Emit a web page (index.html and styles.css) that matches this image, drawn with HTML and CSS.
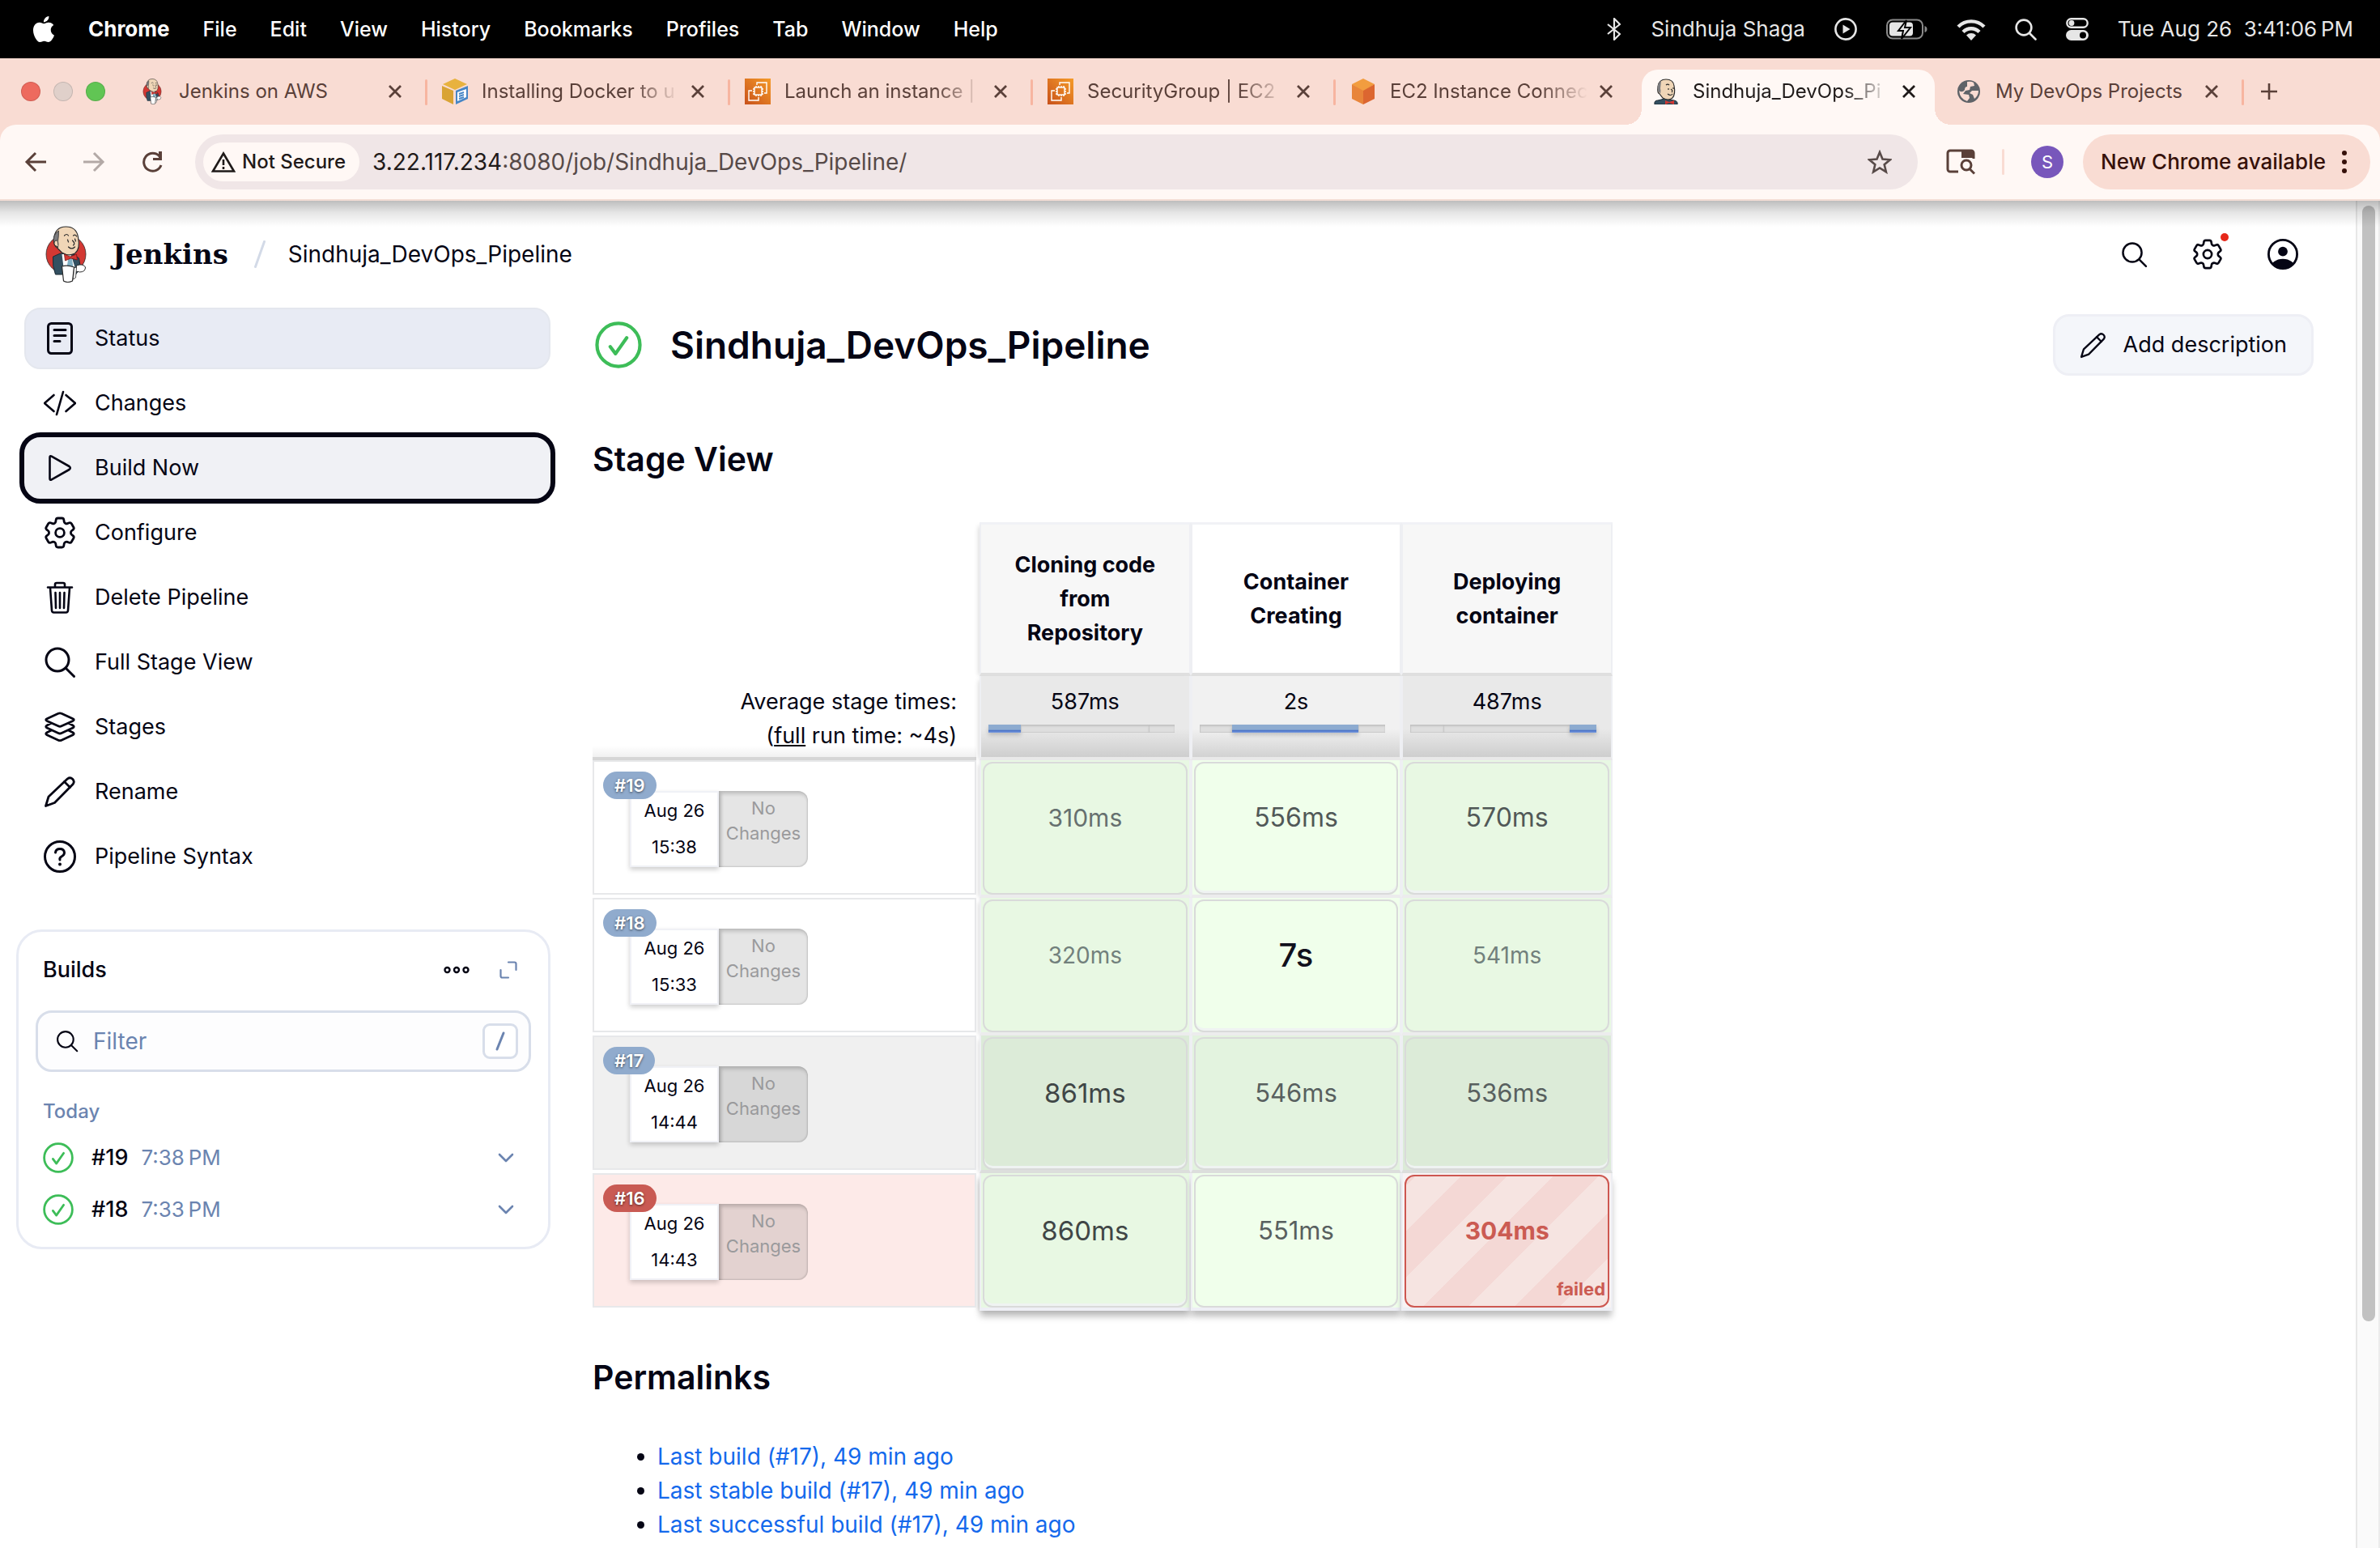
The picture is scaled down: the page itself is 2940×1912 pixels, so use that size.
FILE: index.html
```html
<!DOCTYPE html>
<html lang="en">
<head>
<meta charset="utf-8">
<meta name="viewport" content="width=device-width, initial-scale=1">
<title>Sindhuja_DevOps_Pipeline [Jenkins]</title>
<link rel="stylesheet" href="styles.css">
</head>
<body>
<svg class="sprite" aria-hidden="true">
  <symbol id="i-search" viewBox="0 0 40 40"><g fill="none" stroke="currentColor" stroke-width="3" stroke-linecap="round"><circle cx="17" cy="17" r="14"/><path d="M27.500 27.500 37.500 37.500"/></g></symbol>
  <symbol id="i-gear" viewBox="2 2 20 20"><g fill="none" stroke="currentColor" stroke-width="1.400" stroke-linejoin="round"><path d="M9.594 3.940c.09-.542.56-.94 1.110-.94h2.593c.55 0 1.020.398 1.110.94l.213 1.281c.063.374.313.686.645.87.074.04.147.083.22.127.325.196.72.257 1.075.124l1.217-.456a1.125 1.125 0 0 1 1.370.49l1.296 2.247a1.125 1.125 0 0 1-.26 1.431l-1.003.827c-.293.241-.438.613-.43.992a7.723 7.723 0 0 1 0 .255c-.008.378.137.75.43.991l1.004.827c.424.35.534.955.26 1.430l-1.298 2.247a1.125 1.125 0 0 1-1.369.491l-1.217-.456c-.355-.133-.75-.072-1.076.124a6.470 6.470 0 0 1-.22.128c-.331.183-.581.495-.644.869l-.213 1.281c-.09.543-.56.94-1.110.94h-2.594c-.55 0-1.019-.398-1.110-.94l-.213-1.281c-.062-.374-.312-.686-.644-.87a6.520 6.520 0 0 1-.22-.127c-.325-.196-.72-.257-1.076-.124l-1.217.456a1.125 1.125 0 0 1-1.369-.49l-1.297-2.247a1.125 1.125 0 0 1 .26-1.431l1.004-.827c.292-.24.437-.613.43-.991a6.932 6.932 0 0 1 0-.255c.007-.38-.138-.751-.43-.992l-1.004-.827a1.125 1.125 0 0 1-.26-1.430l1.297-2.247a1.125 1.125 0 0 1 1.370-.491l1.216.456c.356.133.751.072 1.076-.124.072-.044.146-.086.22-.128.332-.183.582-.495.644-.869l.214-1.280Z"/><circle cx="12" cy="12" r="2.700"/></g></symbol>
  <symbol id="i-pencil" viewBox="0 0 40 40"><g fill="none" stroke="currentColor" stroke-width="2.800" stroke-linejoin="round" stroke-linecap="round"><path d="M2.500 37.500 6 26 29.500 3.800a4.800 4.800 0 0 1 6.700 6.700L13.500 33.500Z"/><path d="m25.500 7.500 7 7"/></g></symbol>
  <symbol id="i-ok" viewBox="0 0 40 40"><g fill="none" stroke="currentColor" stroke-width="2.900" stroke-linecap="round" stroke-linejoin="round"><circle cx="20" cy="20" r="18.300"/><path d="m13 21.500 4.500 6L27 14"/></g></symbol>
  <symbol id="i-x" viewBox="0 0 20 20"><path d="m3 3 14 14M17 3 3 17" stroke="currentColor" stroke-width="2.800"/></symbol>
  <symbol id="i-down" viewBox="0 0 20 12"><path d="m2 2 8 8 8-8" fill="none" stroke="currentColor" stroke-width="2.600" stroke-linecap="round" stroke-linejoin="round"/></symbol>
  <symbol id="i-butler" viewBox="0 0 50 70">
    <ellipse cx="25" cy="35" rx="24.500" ry="24" fill="#d33833" stroke="#2b2b2b" stroke-width=".8"/>
    <path d="M9 38 18 34 33 34 41 40 43 52 37 60 12 60Q8 50 9 38Z" fill="#335061" stroke="#1c2a33" stroke-width="1"/>
    <path d="M20 35 31 35 36 51 22 51Z" fill="#fff"/>
    <path d="M28 40 32 38 34 51 26 51Z" fill="#81b0c4"/>
    <path d="M10 17Q11 1 25 1Q38 1 40 14Q43 29 36 34Q28 38 20 33L14 27Q10 25 10 17Z" fill="#f0d6b7" stroke="#2b2b2b" stroke-width="1.200"/>
    <path d="M16 6Q8 11 10 21L15 27Q16 23 15 19 16 13 16 6Z" fill="#7c7c7f" stroke="#2b2b2b" stroke-width=".8"/>
    <path d="M14 18Q9 18 11 24L15 26" fill="#f0d6b7" stroke="#2b2b2b" stroke-width="1"/>
    <path d="M23 12q3-3 5 0M34 12q3-2 4 1M27 17l1 3M36 16l1 3M33 18q4 4 1 6M28 26q4 4 8 0" fill="none" stroke="#2b2b2b" stroke-width="1.200" stroke-linecap="round"/>
    <path d="M23 35 30 38 38 35 39 42 31 40 24 43Z" fill="#d33833" stroke="#7a1412" stroke-width=".8"/>
    <path d="M38 49q8-3 11 2 0 6-7 6l-5-1Z" fill="#fff" stroke="#2b2b2b" stroke-width="1"/>
    <path d="M20 50Q27 48 35 51L33 68Q27 71 22 68Z" fill="#fff" stroke="#2b2b2b" stroke-width="1.200"/>
    <path d="M35 52 38 51 37 64 34 66Z" fill="#fff" stroke="#2b2b2b" stroke-width=".8"/>
  </symbol>
  <symbol id="i-butler-head" viewBox="0 0 32 32">
    <path d="M2 32Q1 27 6 27L14 25 26 27Q31 28 30 32Z" fill="#335061" stroke="#1c2a33" stroke-width="1"/>
    <path d="M6 10Q7 1 16 1Q25 1 26 9Q28 19 24 24Q19 28 12 24L8 19Q5 18 6 10Z" fill="#f0d6b7" stroke="#2b2b2b" stroke-width="1.200"/>
    <path d="M10 3Q4 7 6 15L9 19Q10 15 9 12Z" fill="#7c7c7f"/>
    <path d="M16 8q2-2 4 0M19 12v2M25 11v2M22 13q3 2 1 4M18 19q4 3 6 0" fill="none" stroke="#2b2b2b" stroke-width="1.200"/>
    <path d="M15 27 20 29 26 27V32L20 30 15 32Z" fill="#d33833"/>
  </symbol>
  <symbol id="i-ec2" viewBox="0 0 32 32">
    <defs><linearGradient id="ec2" x1="0" y1="1" x2="1" y2="0"><stop offset="0" stop-color="#c8511b"/><stop offset="1" stop-color="#f59b28"/></linearGradient></defs>
    <rect width="32" height="32" fill="url(#ec2)"/>
    <g fill="none" stroke="#fff" stroke-width="1.400"><rect x="12" y="11" width="9" height="9"/><path d="M14 9v2M17 9v2M20 9v2M14 20v2M17 20v2M20 20v2M10 13h2M10 16h2M10 19h2M21 13h2M21 16h2M21 19h2M15 8V5h12v13h-3M9 15H5v12h12v-4"/></g>
  </symbol>
</svg>

<header class="menubar">
  <nav class="menubar-menus" aria-label="Application menu">
    <button aria-label="Apple"><svg class="apple" viewBox="2 0 20 24"><path fill="currentColor" d="M12.152 6.896c-.948 0-2.415-1.078-3.960-1.040-2.040.027-3.910 1.183-4.961 3.014-2.117 3.675-.546 9.103 1.519 12.090 1.013 1.454 2.208 3.090 3.792 3.039 1.520-.065 2.090-.987 3.935-.987 1.831 0 2.350.987 3.960.948 1.637-.026 2.676-1.480 3.676-2.948 1.156-1.688 1.636-3.325 1.662-3.415-.039-.013-3.182-1.221-3.220-4.857-.026-3.040 2.480-4.494 2.597-4.559-1.429-2.090-3.623-2.324-4.390-2.376-2-.156-3.675 1.090-4.610 1.090zM15.530 3.830c.843-1.012 1.400-2.427 1.245-3.830-1.207.052-2.662.805-3.532 1.818-.78.896-1.454 2.338-1.273 3.714 1.338.104 2.715-.688 3.559-1.701"/></svg></button>
    <button class="app">Chrome</button><button>File</button><button>Edit</button><button>View</button><button>History</button><button>Bookmarks</button><button>Profiles</button><button>Tab</button><button>Window</button><button>Help</button>
  </nav>
  <div class="menubar-status">
    <svg width="18" height="28" viewBox="0 0 18 28" fill="none" stroke="currentColor" stroke-width="2.200" stroke-linejoin="round"><path d="m1 8 15 12-7 7V1l7 7L1 20"/></svg>
    <span>Sindhuja Shaga</span>
    <svg width="28" height="28" viewBox="0 0 28 28"><circle cx="14" cy="14" r="12.600" fill="none" stroke="currentColor" stroke-width="2.600"/><path fill="currentColor" d="M10.500 8.500v11l9-5.500z"/></svg>
    <svg width="51" height="26" viewBox="0 0 51 26"><rect x="1" y="1.500" width="44" height="23" rx="7" fill="none" stroke="#8a8a8a" stroke-width="2"/><path d="M47.500 9v8q3-1 3-4t-3-4" fill="#8a8a8a"/><rect x="4" y="4.500" width="29" height="17" rx="4" fill="currentColor"/><path d="M25 2 15 15h6l-2 10 11-14h-7z" fill="currentColor" stroke="#000" stroke-width="2"/></svg>
    <svg width="36" height="27" viewBox="0 0 36 27"><g fill="none" stroke="currentColor" stroke-width="4.400"><path d="M2 10a22.600 22.600 0 0 1 32 0M8 16.500a14 14 0 0 1 20 0"/></g><path fill="currentColor" d="m18 27-6-6.500a8.500 8.500 0 0 1 12 0z"/></svg>
    <svg width="27" height="27" viewBox="0 0 27 27" fill="none" stroke="currentColor" stroke-width="2.600" stroke-linecap="round"><circle cx="11" cy="11" r="9.400"/><path d="m18 18 7.500 7.500"/></svg>
    <svg width="28" height="28" viewBox="0 0 28 28"><rect x="1.300" y="1.300" width="25.400" height="10.400" rx="5.200" fill="none" stroke="currentColor" stroke-width="2.400"/><circle cx="7" cy="6.500" r="3.400" fill="currentColor"/><rect y="15" width="28" height="13" rx="6.500" fill="currentColor"/><circle cx="21" cy="21.500" r="4" fill="#000"/></svg>
    <time>Tue Aug 26&nbsp; 3:41:06&#8239;PM</time>
  </div>
</header>

<div class="tabstrip">
  <div class="lights"><button class="light close" aria-label="Close window"></button><button class="light minimise" aria-label="Minimise"></button><button class="light zoom" aria-label="Zoom"></button></div>
  <div class="tabs">
    <div class="tab"><svg class="favicon"><use href="#i-butler"/></svg><a href="#" class="tab-title">Jenkins on AWS</a><button class="tab-close" aria-label="Close tab"><svg><use href="#i-x"/></svg></button></div>
    <div class="tab"><svg class="favicon" viewBox="0 0 32 32"><path d="M16 0 31 7 16 14 1 7Z" fill="#e8b23f"/><path d="M0 9 14 15v17L0 25Z" fill="#d9a334"/><path d="M17 15 32 9v16l-15 7Z" fill="#4786c6"/><path d="m19 17 11-4v10l-11 5z" fill="#fff"/><path d="m21 19 6-2M21 22l6-2M21 25l6-2" stroke="#4786c6" stroke-width="2"/></svg><a href="#" class="tab-title">Installing Docker to u</a><button class="tab-close" aria-label="Close tab"><svg><use href="#i-x"/></svg></button></div>
    <div class="tab"><svg class="favicon"><use href="#i-ec2"/></svg><a href="#" class="tab-title">Launch an instance |</a><button class="tab-close" aria-label="Close tab"><svg><use href="#i-x"/></svg></button></div>
    <div class="tab"><svg class="favicon"><use href="#i-ec2"/></svg><a href="#" class="tab-title">SecurityGroup | EC2</a><button class="tab-close" aria-label="Close tab"><svg><use href="#i-x"/></svg></button></div>
    <div class="tab tab-plain"><svg class="favicon" viewBox="0 0 32 32"><path d="M16 0 30 7 16 16 2 7Z" fill="#f29d3f"/><path d="M2 7 16 15v17L2 25Z" fill="#e8853a"/><path d="M30 7 16 15v17l14-7Z" fill="#dc6630"/></svg><a href="#" class="tab-title">EC2 Instance Connec</a><button class="tab-close" aria-label="Close tab"><svg><use href="#i-x"/></svg></button></div>
    <div class="tab tab-active"><svg class="favicon"><use href="#i-butler-head"/></svg><a href="#" class="tab-title">Sindhuja_DevOps_Pi</a><button class="tab-close" aria-label="Close tab"><svg><use href="#i-x"/></svg></button></div>
    <div class="tab"><svg class="favicon" viewBox="0 0 32 32"><circle cx="16" cy="16" r="14" fill="#5f6368"/><path d="M14 4q5-1 8 1l1 4-5 1-1 4-5 1-3 4 7 1 1 4-3 4Q5 25 4 15q4 3 7-1 0-4 3-4zM20 15h8q0 6-5 10l-2-5-4-2z" fill="#f9dcd3"/></svg><a href="#" class="tab-title">My DevOps Projects</a><button class="tab-close" aria-label="Close tab"><svg><use href="#i-x"/></svg></button></div>
  </div>
  <button class="new-tab" aria-label="New tab"><svg width="22" height="22" viewBox="0 0 22 22"><path d="M11 1v20M1 11h20" stroke="currentColor" stroke-width="2.600"/></svg></button>
</div>

<div class="toolbar">
  <div class="toolbar-nav">
    <button aria-label="Back"><svg width="28" height="26" viewBox="0 0 28 26" fill="none" stroke="currentColor" stroke-width="3"><path d="M27 13H3M14 2 3 13l11 11"/></svg></button>
    <button aria-label="Forward" class="off"><svg width="28" height="26" viewBox="0 0 28 26" fill="none" stroke="currentColor" stroke-width="3"><path d="M1 13h24M14 2l11 11-11 11"/></svg></button>
    <button aria-label="Reload"><svg width="28" height="26" viewBox="0 0 28 26"><path d="M25 17A11 11 0 1 1 23 6" fill="none" stroke="currentColor" stroke-width="3"/><path d="M26 0v11H15v-3h7V0z" fill="currentColor"/></svg></button>
  </div>
  <div class="omnibox">
    <button class="chip"><svg width="30" height="26" viewBox="0 0 30 26"><path d="M15 2.500 28 24.500H2Z" fill="none" stroke="currentColor" stroke-width="2.600"/><path d="M15 10v7M15 19v3" stroke="currentColor" stroke-width="2.600"/></svg>Not Secure</button>
    <div class="url" role="textbox" aria-label="Address">3.22.117.234<span>:8080/job/Sindhuja_DevOps_Pipeline/</span></div>
    <button class="star" aria-label="Bookmark this tab"><svg width="30" height="30" viewBox="0 0 30 30"><path d="m15 3 3.500 8.600 9.300.7-7.100 6 2.200 9.100L15 22.500l-7.900 4.900 2.200-9.100-7.100-6 9.300-.7z" fill="none" stroke="currentColor" stroke-width="2.600"/></svg></button>
  </div>
  <button class="lens" aria-label="Search this page"><svg width="36" height="32" viewBox="0 0 36 32"><path d="M15 28H5a3 3 0 0 1-3-3V5a3 3 0 0 1 3-3h26a3 3 0 0 1 3 3v7" fill="none" stroke="currentColor" stroke-width="3"/><path d="M19 2h15v9H19z" fill="currentColor"/><circle cx="25" cy="20" r="6" fill="none" stroke="currentColor" stroke-width="3"/><path d="m29 24.500 6 6" stroke="currentColor" stroke-width="3"/></svg></button>
  <span class="toolbar-rule"></span>
  <button class="avatar" aria-label="Profile">S</button>
  <button class="update">New Chrome available<svg width="6" height="28" viewBox="0 0 6 28" fill="currentColor"><circle cx="3" cy="3" r="3"/><circle cx="3" cy="14" r="3"/><circle cx="3" cy="25" r="3"/></svg></button>
</div>

<div class="viewport">
  <div class="page">
    <header class="page-header">
      <a class="brand" href="#"><svg class="brand-logo"><use href="#i-butler"/></svg>Jenkins</a>
      <svg class="crumb-slash" viewBox="0 0 14 34"><path d="M12.500 1.500 1.500 32.500" stroke="#d3dae7" stroke-width="3" stroke-linecap="round"/></svg>
      <a class="crumb" href="#">Sindhuja_DevOps_Pipeline</a>
      <div class="header-actions">
        <button aria-label="Search"><svg class="icon-s"><use href="#i-search"/></svg></button>
        <button aria-label="Manage Jenkins" class="notify"><svg class="icon-m"><use href="#i-gear"/></svg></button>
        <button aria-label="Account"><svg class="icon-m" viewBox="0 0 40 40"><clipPath id="face"><circle cx="20" cy="20" r="18"/></clipPath><circle cx="20" cy="20" r="18.500" fill="none" stroke="currentColor" stroke-width="3"/><circle cx="20" cy="16.500" r="6.200" fill="currentColor"/><ellipse cx="20" cy="38" rx="16" ry="12" fill="currentColor" clip-path="url(#face)"/></svg></button>
      </div>
    </header>

    <div class="columns">
      <aside class="sidebar">
        <nav class="tasks">
          <a href="#" class="task task-active"><svg class="icon" viewBox="0 0 40 40" fill="none" stroke="currentColor" stroke-width="3" stroke-linecap="round"><rect x="5.500" y="1.500" width="29" height="37" rx="4"/><path d="M13 9.500h14M13 16.500h14M13 23.500h7"/></svg>Status</a>
          <a href="#" class="task"><svg class="icon" viewBox="0 0 40 40" fill="none" stroke="currentColor" stroke-width="2.600" stroke-linecap="round" stroke-linejoin="round"><path d="M12.500 10 1 20l11.500 10M27.500 10 39 20 27.500 30M24 6l-8 28"/></svg>Changes</a>
          <a href="#" class="task task-focus"><svg class="icon" viewBox="0 0 40 40" fill="none" stroke="currentColor" stroke-width="2.600" stroke-linejoin="round"><path d="M7.500 7q0-2.500 2.200-1.300L31.500 18q2.600 2 0 4L9.700 34.300Q7.500 35.500 7.500 33Z"/></svg>Build Now</a>
          <a href="#" class="task"><svg class="icon"><use href="#i-gear"/></svg>Configure</a>
          <a href="#" class="task"><svg class="icon" viewBox="0 0 40 40" fill="none" stroke="currentColor" stroke-width="2.600" stroke-linecap="round" stroke-linejoin="round"><path d="M5 7.500h30M14 7V4q0-2 2-2h8q2 0 2 2v3M8 8l2 28q.2 2.500 2.500 2.500h15Q29.800 38.500 30 36L32 8M14.500 14l.5 19M20 14v19M25.500 14 25 33"/></svg>Delete Pipeline</a>
          <a href="#" class="task"><svg class="icon"><use href="#i-search"/></svg>Full Stage View</a>
          <a href="#" class="task"><svg class="icon" viewBox="0 0 40 40" fill="none" stroke="currentColor" stroke-width="2.800" stroke-linejoin="round"><path d="M18 3.300q2-1 4 0l14 6.500q2.500 1.200 0 2.600l-14 6.400q-2 1-4 0L4 12.400q-2.500-1.400 0-2.600ZM9.500 15 4 18q-2.500 1.500 0 3l14 6.500q2 1 4 0L36 21q2.500-1.500 0-3l-5.500-3M9.500 24 4 26.700q-2.500 1.500 0 3l14 6.500q2 1 4 0l14-6.500q2.500-1.500 0-3L30.500 24"/></svg>Stages</a>
          <a href="#" class="task"><svg class="icon"><use href="#i-pencil"/></svg>Rename</a>
          <a href="#" class="task"><svg class="icon" viewBox="0 0 40 40" fill="none" stroke="currentColor" stroke-width="3" stroke-linecap="round"><circle cx="20" cy="20" r="18.500"/><path d="M14.500 15q.5-4.500 5.500-4.500t5.500 4.500q0 3-3.200 4.700T20 24"/><circle cx="20" cy="29.500" r="1" fill="currentColor" stroke-width="2"/></svg>Pipeline Syntax</a>
        </nav>

        <section class="builds">
          <div class="builds-head">
            <h2>Builds</h2>
            <button aria-label="More actions"><svg width="32" height="10" viewBox="0 0 32 10" fill="none" stroke="currentColor" stroke-width="2.400"><circle cx="4.500" cy="5" r="3"/><circle cx="16" cy="5" r="3"/><circle cx="27.500" cy="5" r="3"/></svg></button>
            <a href="#" aria-label="Open builds" class="muted"><svg width="22" height="22" viewBox="0 0 22 22" fill="none" stroke="currentColor" stroke-width="2.200" stroke-linecap="round"><path d="M11 1.500h7.500a2 2 0 0 1 2 2V11M1.500 11v7.500a2 2 0 0 0 2 2H11"/></svg></a>
          </div>
          <label class="filter">
            <svg class="filter-icon"><use href="#i-search"/></svg>
            <input type="text" placeholder="Filter" aria-label="Filter builds">
            <kbd><svg width="12" height="24" viewBox="0 0 12 24"><path d="M10 2 2 22" stroke="currentColor" stroke-width="3" stroke-linecap="round"/></svg></kbd>
          </label>
          <h3>Today</h3>
          <ul class="build-list">
            <li><svg class="ok"><use href="#i-ok"/></svg><a href="#">#19</a><time>7:38&#8239;PM</time><button aria-label="Build 19 menu"><svg class="chev"><use href="#i-down"/></svg></button></li>
            <li><svg class="ok"><use href="#i-ok"/></svg><a href="#">#18</a><time>7:33&#8239;PM</time><button aria-label="Build 18 menu"><svg class="chev"><use href="#i-down"/></svg></button></li>
          </ul>
        </section>
      </aside>

      <main class="main">
        <div class="title-row">
          <svg class="ok-big"><use href="#i-ok"/></svg>
          <h1>Sindhuja_DevOps_Pipeline</h1>
          <button class="describe"><svg class="icon-s"><use href="#i-pencil"/></svg>Add description</button>
        </div>

        <h2 class="section-title">Stage View</h2>
        <table class="stages">
          <colgroup><col class="col-run"><col class="col-stage"><col class="col-stage"><col class="col-stage"></colgroup>
          <thead>
            <tr class="names"><td></td><th scope="col">Cloning code from Repository</th><th scope="col">Container Creating</th><th scope="col">Deploying container</th></tr>
            <tr class="averages">
              <th scope="row"><div class="avg-label">Average stage times:<br>(<u>full</u> run time: ~4s)</div></th>
              <td>587ms<div class="bar"><span class="fill" style="width:17.500%"></span><span class="rest"></span><span class="rest" style="flex:0 0 14%"></span></div></td>
              <td>2s<div class="bar"><span class="rest" style="flex:0 0 17.500%"></span><span class="fill" style="width:68%"></span><span class="rest"></span></div></td>
              <td>487ms<div class="bar"><span class="rest" style="flex:0 0 17.500%"></span><span class="rest"></span><span class="fill" style="width:14.500%"></span></div></td>
            </tr>
          </thead>
          <tbody>
            <tr>
              <th scope="row"><div class="run"><a href="#" class="badge">#19</a><div class="run-info"><div class="run-date">Aug 26<br>15:38</div><div class="run-changes">No<br>Changes</div></div></div></th>
              <td><div class="cell t1">310ms</div></td><td><div class="cell t3 tall">556ms</div></td><td><div class="cell t3 tall">570ms</div></td>
            </tr>
            <tr>
              <th scope="row"><div class="run"><a href="#" class="badge">#18</a><div class="run-info"><div class="run-date">Aug 26<br>15:33</div><div class="run-changes">No<br>Changes</div></div></div></th>
              <td><div class="cell t0">320ms</div></td><td><div class="cell t5 tall">7s</div></td><td><div class="cell t0">541ms</div></td>
            </tr>
            <tr class="hover">
              <th scope="row"><div class="run"><a href="#" class="badge">#17</a><div class="run-info"><div class="run-date">Aug 26<br>14:44</div><div class="run-changes">No<br>Changes</div></div></div></th>
              <td><div class="cell t4 tall">861ms</div></td><td><div class="cell t2 tall">546ms</div></td><td><div class="cell t2 tall">536ms</div></td>
            </tr>
            <tr class="failed">
              <th scope="row"><div class="run"><a href="#" class="badge">#16</a><div class="run-info"><div class="run-date">Aug 26<br>14:43</div><div class="run-changes">No<br>Changes</div></div></div></th>
              <td><div class="cell t4 tall">860ms</div></td><td><div class="cell t2">551ms</div></td><td class="broken"><div class="cell t1">304ms<span class="note">failed</span></div></td>
            </tr>
          </tbody>
        </table>

        <h2 class="section-title">Permalinks</h2>
        <ul class="permalinks">
          <li><a href="#">Last build (#17), 49 min ago</a></li>
          <li><a href="#">Last stable build (#17), 49 min ago</a></li>
          <li><a href="#">Last successful build (#17), 49 min ago</a></li>
        </ul>
      </main>
    </div>
  </div>
  <div class="scrollbar" aria-hidden="true"><div class="thumb"></div></div>
</div>
</body>
</html>
```

FILE: styles.css
```css
* { box-sizing: border-box; }

:root {
  --ink: #050514;
  --muted: #6b84b0;
  --tabs: #f9dcd3;
  --chrome: #fff8f5;
  --brown: #5a4039;
}

body {
  margin: 0;
  height: 100vh;
  overflow: hidden;
  display: flex;
  flex-direction: column;
  background: var(--tabs);
  color: var(--ink);
  font: 400 27px/42px Inter, "Liberation Sans", sans-serif;
}

button {
  display: flex;
  align-items: center;
  padding: 0;
  border: 0;
  background: none;
  color: inherit;
  font: inherit;
  white-space: nowrap;
}

a { color: inherit; text-decoration: none; }
h1, h2, h3, ul { margin: 0; padding: 0; }
svg { display: block; flex: none; }
.sprite { position: absolute; width: 0; height: 0; }

/* system menu bar */
.menubar {
  flex: none;
  display: flex;
  justify-content: space-between;
  align-items: center;
  height: 72px;
  padding: 0 33px 0 40px;
  background: #000;
  color: #fff;
  font-size: 25px;
  font-weight: 500;
}
.menubar-menus { display: flex; gap: 41px; }
.menubar-menus .app { font-size: 26px; font-weight: 700; }
.apple { width: 28px; height: 32px; }
.menubar-status { display: flex; align-items: center; gap: 36px; color: #e6e6e6; font-size: 26px; font-weight: 400; }

/* tab strip */
.tabstrip {
  flex: none;
  display: flex;
  height: 82px;
  padding-left: 26px;
  background: var(--tabs);
  color: var(--brown);
  font-size: 24px;
}
.lights { display: flex; align-items: center; gap: 16px; margin-right: 22px; }
.light { width: 24px; height: 24px; border-radius: 50%; border: 1px solid rgba(0, 0, 0, .12); }
.light.close { background: #ed6a5e; }
.light.minimise { background: #e0d0ca; }
.light.zoom { background: #61c554; }
.tabs { display: flex; flex: 0 1 2618px; min-width: 0; }
.tab { position: relative; flex: 0 1 374px; min-width: 0; display: flex; align-items: center; padding: 0 28px 0 20px; }
.tab::after { content: ""; position: absolute; right: -2px; top: 26px; width: 3px; height: 32px; border-radius: 2px; background: #f7b5a0; }
.tab-plain::after { display: none; }
.favicon { width: 32px; height: 32px; margin-right: 17px; }
.tab-title { flex: 1; overflow: hidden; white-space: nowrap; }
.tab:not(:first-child):not(:last-child) .tab-title { mask-image: linear-gradient(90deg, #000 calc(100% - 66px), transparent calc(100% - 8px)); }
.tab-close { margin-left: 5px; }
.tab-close svg { width: 20px; height: 20px; }
.tab-active { z-index: 1; flex-basis: 362px; margin: 14px 6px 0; padding: 0 22px 14px 14px; border-radius: 20px 20px 0 0; background: var(--chrome); color: #1f1a19; }
.tab-active::before, .tab-active::after { content: ""; position: absolute; top: auto; bottom: 0; width: 20px; height: 20px; border-radius: 0; }
.tab-active::before { left: -20px; background: radial-gradient(circle at 0 0, transparent 20px, var(--chrome) 20px); }
.tab-active::after { right: -20px; background: radial-gradient(circle at 100% 0, transparent 20px, var(--chrome) 20px); }
.new-tab { margin-left: 22px; }

/* toolbar */
.toolbar {
  flex: none;
  display: flex;
  align-items: center;
  height: 94px;
  padding: 0 12px 0 30px;
  border-bottom: 2px solid #f3ddd5;
  border-radius: 20px 20px 0 0;
  background: var(--chrome);
  color: var(--brown);
}
.toolbar-nav { display: flex; gap: 44px; margin-right: 39px; }
.toolbar-nav .off { color: #b3a9a6; }
.omnibox { flex: 1; display: flex; align-items: center; height: 68px; padding: 0 32px 0 10px; border-radius: 34px; background: #f0e6e7; color: #574a48; }
.chip { gap: 8px; height: 48px; padding: 0 17px 0 10px; border-radius: 24px; background: var(--chrome); color: #1f1a19; font-size: 24px; font-weight: 500; }
.url { flex: 1; padding-left: 16px; color: #1f1a19; font-size: 28px; }
.url span { color: #574a48; }
.lens { margin-left: 35px; }
.toolbar-rule { width: 3px; height: 32px; margin: 0 33px; background: var(--tabs); border-radius: 2px; }
.avatar { justify-content: center; width: 40px; height: 40px; border-radius: 50%; background: #7857bb; color: #fff; font-size: 22px; }
.update { gap: 20px; height: 68px; margin-left: 24px; padding: 0 29px 0 22px; border-radius: 34px; background: var(--tabs); color: #36110a; font-size: 26px; font-weight: 500; }

/* web page */
.viewport { position: relative; flex: 1; min-height: 0; display: flex; background: #fff; }
.viewport::before { content: ""; position: absolute; inset: 0 0 auto; height: 32px; background: linear-gradient(rgba(0, 0, 0, .26), rgba(0, 0, 0, .1) 45%, transparent); z-index: 2; }
.page { flex: 1; min-width: 0; overflow: hidden; }
.scrollbar { width: 30px; padding: 6px; border-left: 2px solid #e7e7e7; border-right: 2px solid #ececec; background: #fafafa; }
.thumb { width: 16px; height: 1378px; max-height: 84%; border-radius: 8px; background: #c1c1c1; }

.page-header { display: flex; align-items: center; height: 132px; padding: 0 71px 0 56px; }
.brand { display: flex; align-items: center; gap: 32px; font: 700 34px/44px "DejaVu Serif", serif; }
.brand-logo { width: 51px; height: 70px; }
.crumb-slash { width: 14px; height: 34px; margin: 0 28px 0 32px; }
.crumb { font-size: 28px; }
.header-actions { display: flex; align-items: center; gap: 55px; margin-left: auto; }
.icon { width: 40px; height: 40px; }
.icon-m { width: 38px; height: 38px; }
.icon-s { width: 33px; height: 33px; }
.notify { position: relative; }
.notify::after { content: ""; position: absolute; right: -7px; top: -7px; width: 10px; height: 10px; border-radius: 50%; background: #e6281a; }

.columns { display: grid; grid-template-columns: 660px minmax(0, 1fr); column-gap: 52px; padding: 0 52px 0 20px; }

.tasks { display: flex; flex-direction: column; gap: 4px; padding-left: 10px; }
.task { display: flex; align-items: center; gap: 23px; height: 76px; padding-left: 22px; border: 2px solid transparent; border-radius: 20px; }
.task-active { background: #e8ebf4; border-color: #e4e7ee; }
.task-focus { background: #f0f1f5; outline: 6px solid var(--ink); }

.builds { margin-top: 52px; padding: 26px 21px 14px; border: 3px solid #e8ebf4; border-radius: 32px; }
.builds-head { display: flex; align-items: center; gap: 37px; padding: 0 17px 0 9px; }
.builds-head h2 { flex: 1; font-size: 27px; font-weight: 500; line-height: 42px; }
.muted { color: var(--muted); }
.filter { display: flex; align-items: center; height: 76px; margin-top: 29px; padding: 0 13px 0 22px; border: 3px solid #d8deea; border-radius: 20px; background: #fdfdfe; }
.filter-icon { width: 28px; height: 28px; margin-right: 18px; }
.filter input { flex: 1; min-width: 0; padding: 0; border: 0; outline: 0; background: none; font: inherit; font-size: 28px; }
.filter input::placeholder { color: var(--muted); opacity: 1; }
.filter kbd { display: grid; place-items: center; width: 44px; height: 44px; border: 3px solid #d8deea; border-radius: 9px; background: #fff; color: var(--muted); }
.builds h3 { margin: 28px 9px 0; color: var(--muted); font-size: 24px; font-weight: 500; line-height: 42px; }
.build-list { display: flex; flex-direction: column; margin-top: 4px; list-style: none; }
.build-list li { display: flex; align-items: center; height: 64px; padding: 0 21px 0 9px; }
.build-list a { margin: 0 16px 0 22px; font-weight: 500; }
.build-list time { flex: 1; color: var(--muted); font-size: 26px; }
.build-list button { color: var(--muted); }
.ok { width: 38px; height: 38px; color: #3dbd58; }
.ok-big { width: 58px; height: 58px; margin: 0 35px 0 3px; color: #3dbd58; }
.chev { width: 20px; height: 12px; }

.title-row { display: flex; align-items: center; height: 76px; margin-top: 8px; }
h1 { font-size: 46px; font-weight: 600; }
.describe { gap: 21px; height: 76px; margin-left: auto; padding: 0 30px; border: 3px solid #eeeff5; border-radius: 20px; background: #f4f6fa; }
.section-title { margin-top: 77px; font-size: 41px; font-weight: 600; line-height: 52px; }

/* stage table */
.stages { margin: 52px 0 -21px; border-spacing: 0; table-layout: fixed; width: 1260px; }
.stages th, .stages td { padding: 0; text-align: center; font-weight: 400; }
.col-run { width: 478px; }
.stages tr > :nth-child(n+2) { border: 2px solid #eeeff3; border-width: 0 2px; }
.stages tr > :nth-child(2) { box-shadow: -4px 2px 6px -3px rgba(0, 0, 0, .16); }
.stages .names th { height: 190px; padding: 0 30px; border-top: 3px solid #f1f2f6; border-bottom: 4px solid #dfdfdf; background: #f7f7f7; font-weight: 700; line-height: 42px; }
.stages .names th:nth-child(3) { background: #fff; }
.stages .averages td { height: 104px; padding: 11px 0 0; border-bottom: 4px solid #e9e9e9; background: linear-gradient(#e9e9e9 65%, #cecece); vertical-align: top; }
.stages .averages td:nth-child(3) { background: linear-gradient(#f1f1f1 65%, #d2d2d2); }
.stages .averages th { vertical-align: bottom; }
.avg-label { height: 104px; margin-right: 4px; padding: 11px 24px 0 0; border-bottom: 4px solid #d6d6d6; background: linear-gradient(transparent 86%, #f1f1f1); text-align: right; }
.bar { display: flex; height: 10px; margin: 7px 18px 0 9px; }
.bar .rest { flex: 1; background: #dedede; box-shadow: inset 0 2px 2px #c2c2c2, inset 1px -1px 1px #cacaca; }
.bar .fill { background: linear-gradient(#8dabd0 60%, #4c74c8 75%, #7d9fe0); box-shadow: 0 3px 5px rgba(0, 0, 0, .18); }

.stages tbody th { vertical-align: top; }
.stages tbody td { height: 170px; padding: 2px 2px 0; border-bottom: 4px solid #ececed; background: #e8f8e3; vertical-align: top; }
.stages tbody td:nth-child(n+2) { border-bottom: 4px solid #ececed; }
.stages tbody td:nth-child(3) { background: #f0ffeb; }
.stages .hover td { background: #dcebd8; }
.stages .hover td:nth-child(n+2) { border-bottom-color: #dcdedc; }
.stages .hover td:nth-child(3) { background: #e3f3df; }
.stages .failed td:nth-child(n+2) { border-bottom-color: #eeeff5; box-shadow: 0 8px 8px -1px rgba(0, 0, 0, .26); }
.stages .failed td:nth-child(2) { box-shadow: 0 8px 8px -1px rgba(0, 0, 0, .26), -4px 2px 6px -3px rgba(0, 0, 0, .16); }
.cell { position: relative; display: flex; align-items: center; justify-content: center; height: 164px; padding-bottom: 26px; border: 2px solid #d9dada; border-radius: 12px; }
.cell.tall { box-shadow: inset 0 -3px #eff3f2; }
.t0 { font-size: 28px; color: #72807c; }
.t1 { font-size: 30px; color: #66706f; }
.t2 { font-size: 31px; color: #58605f; }
.t3 { font-size: 32px; color: #515857; }
.t4 { font-size: 33px; color: #404646; }
.t5 { font-size: 40px; font-weight: 500; color: #10101c; }
.stages .broken { background: #f8f3f4; }
.broken .cell { border-color: #cd5750; background: repeating-linear-gradient(135deg, #f4d8d5 0 8px, #f6e4e1 8px 48px, #f4d8d5 48px 80px); color: #cb5b52; font-weight: 700; }
.note { position: absolute; right: 3px; bottom: 6px; font-size: 22px; line-height: 30px; }

.run { position: relative; height: 166px; margin: 0 4px 4px 0; padding: 36px 0 0 44px; border: 2px solid #e7e8ea; text-align: left; }
.hover .run { background: #f0f0f0; }
.failed .run { background: #fdeae8; }
.badge { position: absolute; z-index: 1; left: 11px; top: 12px; padding: 0 14px; border-radius: 17px; background: #90abcd; color: #fff; font-size: 22px; font-weight: 600; line-height: 34px; text-shadow: 0 1px 3px rgba(0, 0, 0, .6); }
.failed .badge { background: #c95a53; }
.run-info { display: flex; font-size: 22px; text-align: center; }
.run-date { width: 110px; height: 94px; border: 2px solid #f0f1f6; background: #fff; box-shadow: 0 3px 6px rgba(0, 0, 0, .2); line-height: 45px; }
.run-changes { width: 110px; height: 94px; padding-top: 6px; border-radius: 0 12px 12px 0; background: rgba(0, 0, 0, .1); box-shadow: inset 2px 3px 5px rgba(0, 0, 0, .2), inset -1px -1px 2px rgba(0, 0, 0, .12); color: #9a9a9c; line-height: 31px; }

.permalinks { margin-top: 51px; padding-left: 80px; font-size: 28px; }
.permalinks a { color: #1469ec; }
```
